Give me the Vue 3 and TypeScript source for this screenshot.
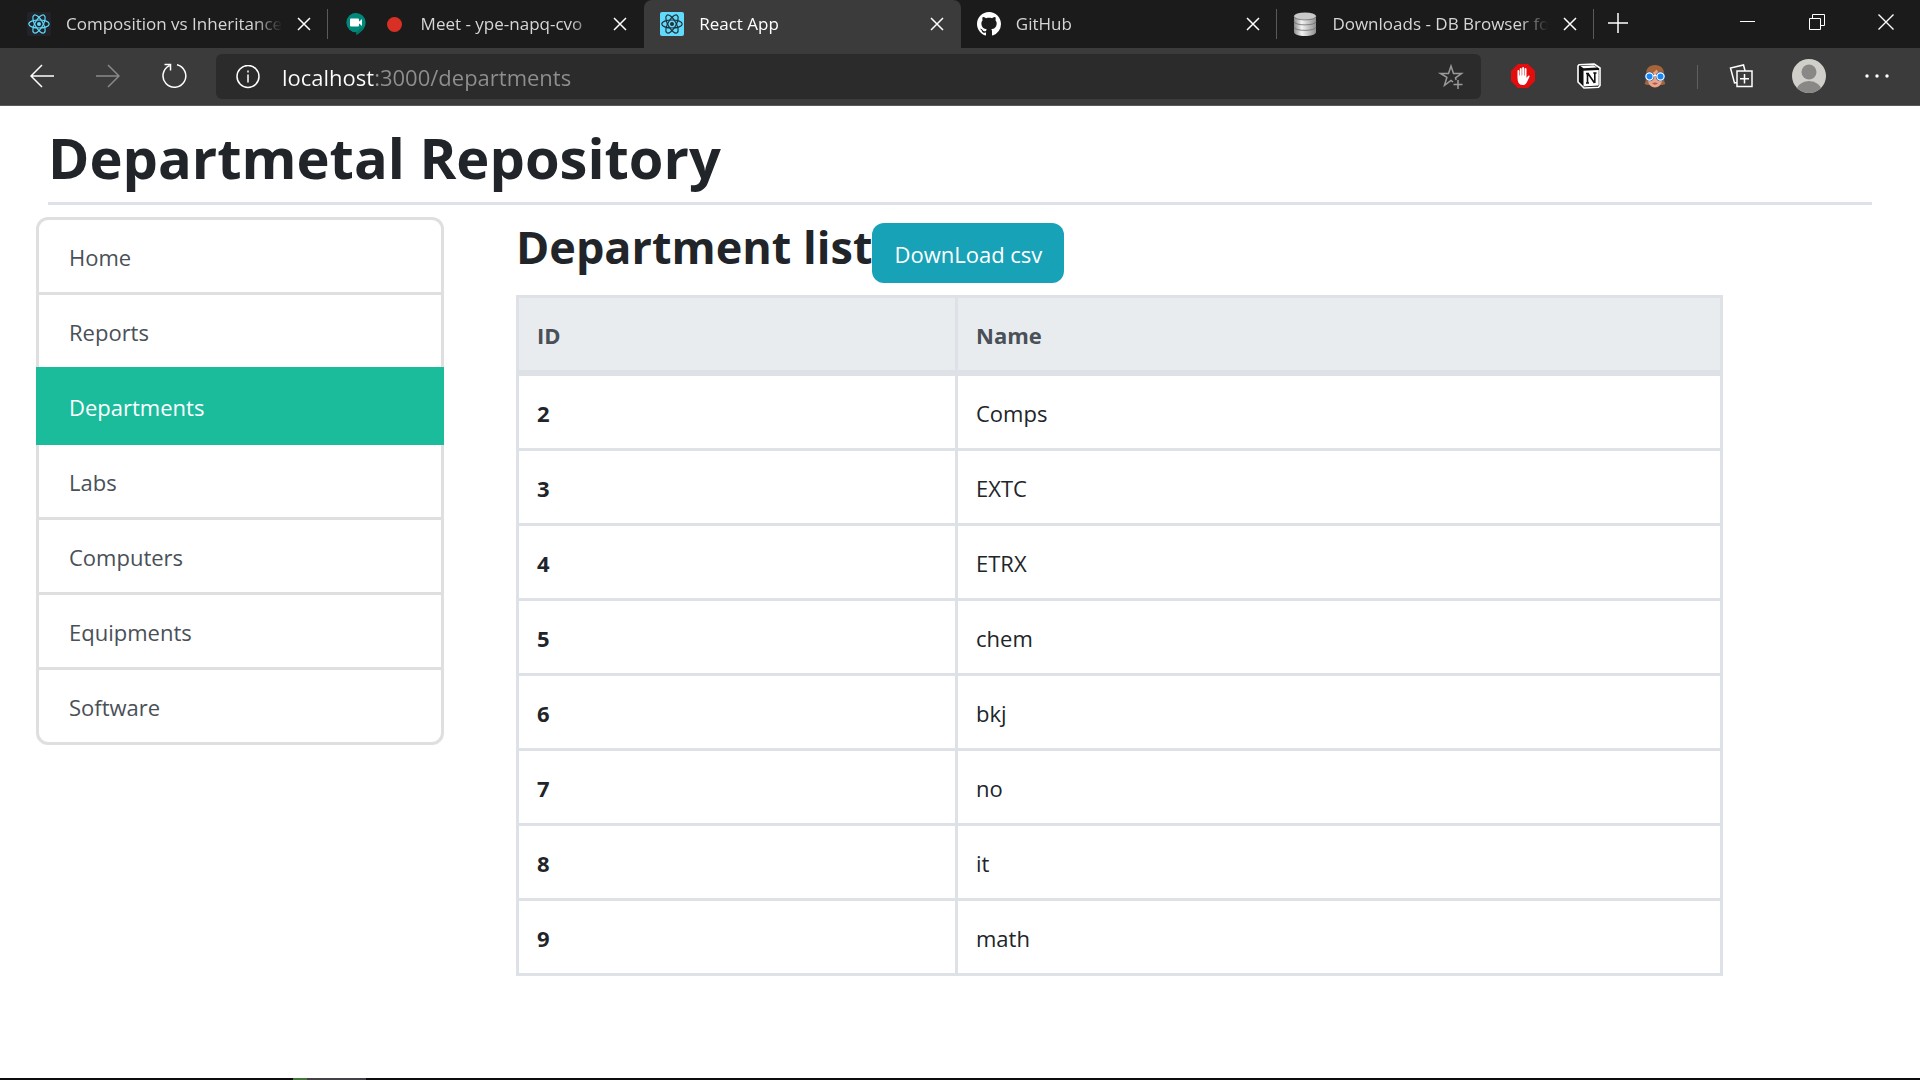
<script setup lang="ts">
import { ref } from 'vue'

interface Tab {
  title: string
  icon: 'react' | 'meet' | 'react-app' | 'github' | 'database'
  recording?: boolean
}

interface Department {
  id: number
  name: string
}

const tabs: Tab[] = [
  { title: 'Composition vs Inheritance', icon: 'react' },
  { title: 'Meet - ype-napq-cvo', icon: 'meet', recording: true },
  { title: 'React App', icon: 'react-app' },
  { title: 'GitHub', icon: 'github' },
  { title: 'Downloads - DB Browser fo', icon: 'database' },
]
const activeTab = ref(2)
const address = ref('localhost:3000/departments')

const menu = ['Home', 'Reports', 'Departments', 'Labs', 'Computers', 'Equipments', 'Software']
const current = ref('Departments')

const departments: Department[] = [
  { id: 2, name: 'Comps' },
  { id: 3, name: 'EXTC' },
  { id: 4, name: 'ETRX' },
  { id: 5, name: 'chem' },
  { id: 6, name: 'bkj' },
  { id: 7, name: 'no' },
  { id: 8, name: 'it' },
  { id: 9, name: 'math' },
]

function downloadCsv() {
  const rows = ['ID,Name', ...departments.map((d) => `${d.id},${d.name}`)]
  const link = document.createElement('a')
  link.href = URL.createObjectURL(new Blob([rows.join('\n')], { type: 'text/csv' }))
  link.download = 'departments.csv'
  link.click()
}
</script>

<template>
  <div class="window">
    <div class="tabstrip">
      <div class="tabs">
        <div
          v-for="(tab, i) in tabs"
          :key="tab.title"
          class="tab"
          :class="{ active: i === activeTab, divided: i !== activeTab && i + 1 !== activeTab }"
        >
          <svg v-if="tab.icon === 'react' || tab.icon === 'react-app'" class="favicon" viewBox="0 0 24 24">
            <rect width="24" height="24" rx="2" :fill="tab.icon === 'react' ? '#20232a' : '#61dafb'" />
            <g fill="none" :stroke="tab.icon === 'react' ? '#61dafb' : '#20303a'" stroke-width="1.2">
              <ellipse cx="12" cy="12" rx="10.2" ry="4" />
              <ellipse cx="12" cy="12" rx="10.2" ry="4" transform="rotate(60 12 12)" />
              <ellipse cx="12" cy="12" rx="10.2" ry="4" transform="rotate(120 12 12)" />
            </g>
            <circle cx="12" cy="12" r="2" :fill="tab.icon === 'react' ? '#61dafb' : '#20303a'" />
          </svg>
          <svg v-else-if="tab.icon === 'meet'" class="favicon" viewBox="0 0 24 24">
            <path d="M12 1a9.600 9.600 0 0 1 9.600 9.600c0 5.400-4 8.400-9.100 12.400v-3A9.500 9.500 0 0 1 12 1z" fill="#00897b" />
            <path d="M12 1a9.600 9.600 0 0 0 0 19.200h.8V1z" fill="#00897b" />
            <path d="M17 15.500l3.500 0c-1.500 3-4.500 5-8 7.500v-3z" fill="#00796b" />
            <rect x="6" y="6.500" width="9" height="8" rx="1" fill="#fff" />
            <path d="M14 10.500l4-3.500v7z" fill="#fff" />
          </svg>
          <svg v-else-if="tab.icon === 'github'" class="favicon" viewBox="0 0 16 16">
            <path
              fill="#fff"
              d="M8 0C3.580 0 0 3.580 0 8c0 3.540 2.290 6.530 5.470 7.590.4.070.55-.17.55-.38 0-.19-.01-.82-.01-1.490-2.010.37-2.530-.49-2.690-.94-.09-.23-.48-.94-.82-1.130-.28-.15-.68-.52-.01-.53.63-.01 1.080.58 1.230.82.72 1.210 1.870.87 2.330.66.07-.52.28-.87.51-1.070-1.780-.2-3.640-.89-3.640-3.950 0-.87.31-1.590.82-2.150-.08-.2-.36-1.020.08-2.120 0 0 .67-.21 2.200.82.64-.18 1.320-.27 2-.27s1.360.09 2 .27c1.530-1.040 2.200-.82 2.200-.82.44 1.100.16 1.920.08 2.120.51.56.82 1.270.82 2.150 0 3.070-1.870 3.750-3.650 3.950.29.25.54.73.54 1.480 0 1.070-.01 1.930-.01 2.200 0 .21.15.46.55.38A8.010 8.010 0 0 0 16 8c0-4.420-3.580-8-8-8z"
            />
          </svg>
          <svg v-else class="favicon" viewBox="0 0 24 24">
            <defs>
              <linearGradient id="disk">
                <stop offset="0" stop-color="#8b8b8b" />
                <stop offset=".35" stop-color="#f3f3f3" />
                <stop offset="1" stop-color="#8e8e8e" />
              </linearGradient>
            </defs>
            <path d="M1 4v16c0 5.300 22 5.300 22 0V4z" fill="url(#disk)" />
            <ellipse cx="12" cy="4" rx="11" ry="3.500" fill="#c9c9c9" />
            <path
              d="M1 4.500c0 4.500 22 4.500 22 0M1 9.500c0 4.500 22 4.500 22 0M1 15c0 4.500 22 4.500 22 0"
              fill="none"
              stroke="#6c6c6c"
              stroke-width=".8"
            />
          </svg>
          <span v-if="tab.recording" class="recording"></span>
          <button type="button" class="tab-title" @click="activeTab = i">{{ tab.title }}</button>
          <button type="button" class="tab-close" aria-label="Close tab">
            <svg width="14" height="14" viewBox="0 0 14 14"><path d="M1 1l12 12M13 1L1 13" /></svg>
          </button>
        </div>
      </div>
      <button type="button" class="new-tab" aria-label="New tab">
        <svg width="20" height="20" viewBox="0 0 20 20"><path d="M10 0v20M0 10h20" /></svg>
      </button>
      <div class="window-controls">
        <button type="button" aria-label="Minimize">
          <svg width="16" height="16" viewBox="0 0 16 16"><path d="M0 7.500h15" /></svg>
        </button>
        <button type="button" aria-label="Restore">
          <svg width="16" height="16" viewBox="0 0 16 16">
            <path d="M.5 4.500h11v11H.500zM3.500 4.500v-4h12v11h-4" />
          </svg>
        </button>
        <button type="button" aria-label="Close">
          <svg width="16" height="16" viewBox="0 0 16 16"><path stroke-width="1.400" d="M.5.5l15 15M15.500.5l-15 15" /></svg>
        </button>
      </div>
    </div>

    <div class="toolbar">
      <button type="button" class="tool" aria-label="Back">
        <svg width="24" height="24" viewBox="0 0 24 24"><path d="M12 1L1 12l11 11M1 12h23" /></svg>
      </button>
      <button type="button" class="tool" aria-label="Forward" disabled>
        <svg width="24" height="24" viewBox="0 0 24 24"><path d="M12 1l11 11-11 11M23 12H0" /></svg>
      </button>
      <button type="button" class="tool" aria-label="Refresh">
        <svg width="26" height="26" viewBox="0 0 26 26">
          <path d="M16 1.800A11.400 11.400 0 1 1 8.500 2.600M3.500 1.500h6v6" />
        </svg>
      </button>
      <label class="address">
        <svg width="24" height="24" viewBox="0 0 24 24">
          <circle cx="12" cy="11.500" r="11" />
          <path d="M12 9.500v8M12 5.500v2" />
        </svg>
        <input v-model="address" type="text" aria-label="Address" spellcheck="false" />
        <svg class="star" width="28" height="28" viewBox="0 0 28 28">
          <path d="M16 19l-2-1.500-6.500 4.800 2.400-8L3.500 10.500h8L14 3l2.500 7.500h8l-6 4.300.6 2.200M21 17v9M16.500 21.500h9" />
        </svg>
      </label>
      <div class="extensions">
        <button type="button" class="tool" aria-label="Ad blocker">
          <svg width="24" height="24" viewBox="0 0 24 24" class="filled">
            <path d="M7 0h10l7 7v10l-7 7H7l-7-7V7z" fill="#e40d0d" />
            <path
              d="M6.500 13V7a.9.9 0 0 1 1.800 0v4.500h.5V5a.9.9 0 0 1 1.900 0v6.500h.5V4a.9.9 0 0 1 1.900 0v7.500h.5V5a.9.9 0 0 1 1.900 0v9l1.300-1.800c.8-1.200 2.200-.6 1.700.5l-2.500 5.300c-.9 2-2 3-4.500 3-3.600 0-5-2.800-5-8z"
              fill="#fff"
            />
          </svg>
        </button>
        <button type="button" class="tool" aria-label="Notion">
          <svg width="24" height="26" viewBox="0 0 24 26" class="filled">
            <path
              d="M2 1.800L17 1l6 4v17.500l-1.500 1.800L7 25l-6-6V3z"
              fill="#111"
              stroke="#fff"
              stroke-width="1.600"
              stroke-linejoin="round"
            />
            <path d="M3.500 3L16.500 2.200 20 4.600 6.500 5.300z" fill="#fff" />
            <path d="M6.500 7.800l15.200-.9v15.600l-15.200.9z" fill="#fff" />
            <path
              d="M9 10.500h3M10.500 10.500v9.500M9 20h3M11 10.500l6.500 9.500M17.800 9.800V20M16.300 10h3.200"
              fill="none"
              stroke="#111"
              stroke-width="1.600"
            />
          </svg>
        </button>
        <button type="button" class="tool" aria-label="Profile switcher">
          <svg width="22" height="24" viewBox="0 0 22 24" class="filled">
            <path d="M11 1C5 1 2 4.500 2 10c0 5 0 7.500-1.500 10l3 1h15l3-1C20 17.500 20 15 20 10c0-5.500-3-9-9-9z" fill="#a5643a" />
            <path d="M4 11c2-1 6-2 8.500-5.500C13.500 8 16.500 9.500 18 11v5c0 4.500-3.500 7.500-7 7.500S4 20.500 4 16z" fill="#eba486" />
            <circle cx="5.500" cy="12.500" r="4.800" fill="#174f9b" />
            <circle cx="16.500" cy="12.500" r="4.800" fill="#174f9b" />
            <circle cx="5.500" cy="12.500" r="3.600" fill="#1787f5" stroke="#fff" stroke-width="1.200" />
            <circle cx="16.500" cy="12.500" r="3.600" fill="#1787f5" stroke="#fff" stroke-width="1.200" />
            <path d="M9.500 12q1.500-1.500 3 0" fill="none" stroke="#fff" stroke-width="1.200" />
            <path d="M8 19.500c2-1.200 4-1.200 6 0-2 1.500-4 1.500-6 0z" fill="#a85b55" />
          </svg>
        </button>
      </div>
      <span class="divider"></span>
      <div class="browser-menu">
        <button type="button" class="tool" aria-label="Collections">
          <svg width="24" height="24" viewBox="0 0 24 24">
            <path d="M8 7h15v15.500H8zM15.500 10v9.500M11 14.700h9M8 18.500l-2.500.5L1.500 4l13-3 1.600 6" />
          </svg>
        </button>
        <button type="button" class="tool" aria-label="Profile">
          <svg width="34" height="34" viewBox="0 0 34 34" class="filled">
            <defs>
              <clipPath id="avatar"><circle cx="17" cy="17" r="17" /></clipPath>
            </defs>
            <g clip-path="url(#avatar)">
              <rect width="34" height="34" fill="#d0cfca" />
              <circle cx="17" cy="13" r="7.500" fill="#8a8886" />
              <ellipse cx="17" cy="32" rx="12.500" ry="10" fill="#8a8886" />
            </g>
          </svg>
        </button>
        <button type="button" class="tool" aria-label="Settings and more">
          <svg width="24" height="6" viewBox="0 0 24 6" class="filled">
            <g fill="#fff"><circle cx="2" cy="3" r="1.700" /><circle cx="12" cy="3" r="1.700" /><circle cx="22" cy="3" r="1.700" /></g>
          </svg>
        </button>
      </div>
    </div>

    <div class="page">
      <header class="page-header">
        <h1>Departmetal Repository</h1>
      </header>
      <div class="columns">
        <nav class="sidebar">
          <ul>
            <li v-for="item in menu" :key="item">
              <a
                :href="'/' + item.toLowerCase()"
                :class="{ current: item === current }"
                @click.prevent="current = item"
              >{{ item }}</a>
            </li>
          </ul>
        </nav>
        <main>
          <div class="list-header">
            <h2>Department list</h2>
            <button type="button" class="download" @click="downloadCsv">DownLoad csv</button>
          </div>
          <table>
            <thead>
              <tr>
                <th class="id-column" scope="col">ID</th>
                <th scope="col">Name</th>
              </tr>
            </thead>
            <tbody>
              <tr v-for="department in departments" :key="department.id">
                <th scope="row">{{ department.id }}</th>
                <td>{{ department.name }}</td>
              </tr>
            </tbody>
          </table>
        </main>
      </div>
    </div>

    <div class="taskbar"><span class="app-badge"></span><span class="app-open"></span></div>
  </div>
</template>

<style>
body {
  margin: 0;
  background: #fff;
}
</style>

<style scoped>
.window {
  display: flex;
  flex-direction: column;
  min-height: 100vh;
  font-family: 'Open Sans', 'Noto Sans', sans-serif;
  font-size: 22px;
  color: #212529;
}

button {
  padding: 0;
  border: 0;
  background: none;
  color: inherit;
  font: inherit;
}

svg {
  display: block;
  flex: none;
  fill: none;
  stroke: #fff;
  stroke-width: 1.5;
}

svg.favicon,
svg.filled {
  stroke: none;
}

/* Tab strip */
.tabstrip {
  display: flex;
  height: 48px;
  padding-left: 11px;
  background: #1b1b1b;
  color: #d6d6d6;
  font-size: 17px;
}

.tabs {
  display: flex;
  flex: 0 1 1583px;
  min-width: 0;
}

.tab {
  position: relative;
  display: flex;
  flex: 1 1 0;
  align-items: center;
  min-width: 0;
  box-sizing: border-box;
  padding: 0 12px 0 16px;
}

.tab.divided::after {
  content: '';
  position: absolute;
  top: 9px;
  right: 0;
  width: 1px;
  height: 30px;
  background: #5a5a5a;
}

.tab.active {
  border-radius: 8px 8px 0 0;
  background: #3b3b3b;
  color: #fff;
}

.favicon {
  width: 24px;
  height: 24px;
  margin-right: 15px;
}

.recording {
  flex: none;
  width: 15px;
  height: 15px;
  margin: 0 19px 0 4px;
  border-radius: 50%;
  background: #d93025;
}

.tab-title {
  flex: 1;
  overflow: hidden;
  margin-right: 10px;
  padding-bottom: 2px;
  text-align: left;
  white-space: nowrap;
  mask-image: linear-gradient(to left, transparent, #000 28px);
}

.tab-close,
.new-tab,
.window-controls button,
.tool {
  display: flex;
  flex: none;
  align-items: center;
  justify-content: center;
}

.tab-close {
  width: 24px;
  height: 24px;
}

.new-tab {
  width: 48px;
  height: 46px;
}

.window-controls {
  display: flex;
  height: 43px;
  margin-left: auto;
}

.window-controls button {
  width: 69px;
}

.window-controls svg {
  stroke-width: 1;
}

/* Toolbar */
.toolbar {
  display: flex;
  align-items: center;
  height: 57px;
  padding: 0 10px 0 9px;
  border-bottom: 1px solid #5c585a;
  background: #3b3b3b;
}

.tool {
  width: 66px;
  height: 45px;
  padding-bottom: 1px;
}

.tool:disabled {
  opacity: 0.4;
}

.address {
  display: flex;
  flex: 1;
  align-items: center;
  height: 45px;
  min-width: 0;
  margin: 0 9px;
  padding: 0 16px 0 20px;
  border-radius: 6px;
  background: #2b2b2b;
  box-sizing: border-box;
}

.address input {
  flex: 1;
  min-width: 0;
  margin: 0 15px 0 22px;
  padding: 0;
  border: 0;
  outline: 0;
  background: linear-gradient(90deg, #fff 93px, #8f8f8f 93px);
  background-clip: text;
  color: transparent;
  font: inherit;
}

.star {
  stroke: #9a9a9a;
}

.extensions {
  display: flex;
}

.divider {
  width: 1px;
  height: 24px;
  margin: 0 10px 0 9px;
  background: #606060;
}

.browser-menu {
  display: flex;
  gap: 2px;
}

/* Page */
.page {
  flex: 1;
}

.page-header {
  margin: 0 48px 12px;
  padding: 15px 0 9px;
  border-bottom: 3px solid #dee2e6;
}

h1 {
  margin: 0;
  font-size: 56px;
  line-height: 72px;
}

.columns {
  display: grid;
  grid-template-columns: 480fr 1243fr 197fr;
  align-items: start;
}

.sidebar {
  padding: 0 36px;
}

.sidebar ul {
  margin: 0;
  padding: 0;
  list-style: none;
}

.sidebar li + li {
  margin-top: -3px;
}

.sidebar a {
  position: relative;
  display: block;
  padding: 19px 30px 17px;
  border: 3px solid #dfdfdf;
  color: #495057;
  line-height: 36px;
  text-decoration: none;
}

.sidebar li:first-child a {
  border-radius: 12px 12px 0 0;
}

.sidebar li:last-child a {
  border-radius: 0 0 12px 12px;
}

.sidebar a.current {
  z-index: 1;
  border-color: #1abc9c;
  background: #1abc9c;
  color: #fff;
}

main {
  padding-left: 36px;
}

.list-header {
  display: flex;
  align-items: flex-start;
  padding-bottom: 12px;
}

h2 {
  margin: 0;
  font-size: 45px;
  line-height: 60px;
  white-space: nowrap;
}

.download {
  height: 60px;
  margin-top: 6px;
  padding: 2px 22px 0;
  border-radius: 12px;
  background: #17a2b8;
  color: #fff;
}

table {
  width: 100%;
  border-collapse: collapse;
  table-layout: fixed;
}

th,
td {
  height: 36px;
  padding: 19px 18px 17px;
  border: 3px solid #dee2e6;
  line-height: 36px;
  text-align: left;
}

thead th {
  border-bottom-width: 6px;
  background: #e9ecef;
  color: #495057;
}

.id-column {
  width: 400px;
}

/* Edge of the desktop taskbar */
.taskbar {
  display: flex;
  height: 2px;
  padding-left: 293px;
  background: #0c0c0e;
}

.app-badge {
  width: 14px;
  background: #43763b;
}

.app-open {
  width: 59px;
  background: #434146;
}
</style>
